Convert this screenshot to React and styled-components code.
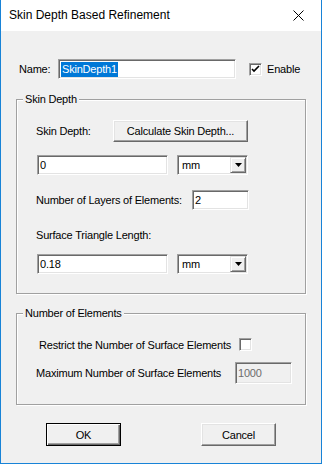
import React from 'react';
import styled, {createGlobalStyle} from 'styled-components';

const Global = createGlobalStyle`
  html, body {
    margin: 0;
    padding: 0;
    background: #ffffff;
  }
  * {
    box-sizing: border-box;
  }
`

const Window = styled.div`
  width: 322px;
  height: 464px;
  border: 1px solid #1883d7;
  border-top: none;
  display: flex;
  flex-direction: column;
  background: #f0f0f0;
  font-family: "Liberation Sans", Arial, sans-serif;
  font-size: 11px;
  letter-spacing: -0.2px;
  color: #000;
`

const TitleBar = styled.div`
  height: 31px;
  flex: none;
  background: #ffffff;
  display: flex;
  align-items: center;
  justify-content: space-between;
  padding: 0 0 1px 8px;
  font-family: "Liberation Sans", Arial, sans-serif;
  font-size: 12px;
  letter-spacing: 0;
`

const CloseButton = styled.div`
  width: 46px;
  height: 30px;
  display: flex;
  align-items: center;
  justify-content: center;
`

const Body = styled.div`
  padding: 0 15px;
  display: flex;
  flex-direction: column;
`

const Row = styled.div`
  display: flex;
  align-items: center;
  height: ${p => p.$h || 20}px;
  margin-top: ${p => p.$mt || 0}px;
  margin-left: ${p => p.$ml || 0}px;
`

const Label = styled.span`
  width: ${p => p.$w ? `${p.$w}px` : 'auto'};
  margin-left: ${p => p.$ml || 0}px;
  flex: none;
  white-space: nowrap;
`

const TextField = styled.div`
  width: ${p => p.$w}px;
  height: ${p => p.$h || 20}px;
  margin-left: ${p => p.$ml || 0}px;
  flex: none;
  display: flex;
  align-items: center;
  padding-left: 2px;
  border: 1px solid;
  border-color: #a0a0a0 #ffffff #ffffff #a0a0a0;
  box-shadow: inset 1px 1px 0 #696969, inset -1px -1px 0 #e3e3e3;
  background: ${p => p.$disabled ? '#f0f0f0' : '#ffffff'};
  color: ${p => p.$disabled ? '#6d6d6d' : '#000'};
  white-space: nowrap;
  overflow: hidden;
`

const Selected = styled.span`
  background: #0078d7;
  color: #ffffff;
  padding: 1px;
  line-height: 13px;
`

const CheckBox = styled.div`
  width: 13px;
  height: 13px;
  margin-left: ${p => p.$ml || 0}px;
  flex: none;
  background: #ffffff;
  border: 1px solid;
  border-color: #a0a0a0 #ffffff #ffffff #a0a0a0;
  box-shadow: inset 1px 1px 0 #696969, inset -1px -1px 0 #e3e3e3;
  display: flex;
  align-items: center;
  justify-content: center;
`

const Group = styled.div`
  position: relative;
  height: ${p => p.$h}px;
  margin-top: ${p => p.$mt}px;
  border: 1px solid #a0a0a0;
  box-shadow: inset 1px 1px 0 #ffffff, 1px 1px 0 #ffffff;
  padding: ${p => p.$pt}px 0 0 19px;
  display: flex;
  flex-direction: column;
`

const Caption = styled.span`
  position: absolute;
  top: -7px;
  left: 6px;
  padding: 0 2px;
  line-height: 13px;
  background: #f0f0f0;
`

const Button = styled.div`
  width: ${p => p.$w}px;
  height: ${p => p.$h || 23}px;
  margin-left: ${p => p.$ml || 0}px;
  flex: none;
  display: flex;
  align-items: center;
  justify-content: center;
  background: #f0f0f0;
  border: 1px solid;
  border-color: ${p => p.$default ? '#000' : '#ffffff #696969 #696969 #ffffff'};
  box-shadow: ${p => p.$default
    ? 'inset 1px 1px 0 #ffffff, inset -1px -1px 0 #696969, inset -2px -2px 0 #a0a0a0'
    : 'inset -1px -1px 0 #a0a0a0, inset 1px 1px 0 #e3e3e3'};
`

const Select = styled.div`
  width: ${p => p.$w}px;
  height: 20px;
  margin-left: ${p => p.$ml || 0}px;
  flex: none;
  display: flex;
  align-items: stretch;
  border: 1px solid;
  border-color: #a0a0a0 #ffffff #ffffff #a0a0a0;
  box-shadow: inset 1px 1px 0 #696969, inset -1px -1px 0 #e3e3e3;
  background: #ffffff;
  padding: 1px;
`

const SelectValue = styled.span`
  flex: 1;
  display: flex;
  align-items: center;
  padding-left: 3px;
`

const DropButton = styled.span`
  width: 16px;
  display: flex;
  align-items: center;
  justify-content: center;
  background: #f0f0f0;
  border: 1px solid;
  border-color: #e3e3e3 #696969 #696969 #e3e3e3;
  box-shadow: inset 1px 1px 0 #ffffff, inset -1px -1px 0 #a0a0a0;
`

const ButtonRow = styled.div`
  display: flex;
  margin-top: 18px;
`

const Check = () => (
  <svg width="9" height="9" viewBox="0 0 9 9">
    <path d="M1 4 L3 6 L8 1" stroke="#000" strokeWidth="1.6" fill="none"/>
  </svg>
)

const Arrow = () => (
  <svg width="7" height="4" viewBox="0 0 7 4">
    <path d="M0 0 H7 L3.5 4 Z" fill="#000"/>
  </svg>
)

const UnitSelect = ({ml}) => (
  <Select $w={71} $ml={ml}>
    <SelectValue>mm</SelectValue>
    <DropButton><Arrow/></DropButton>
  </Select>
)

const App = () => {
  return (
    <Window>
      <Global/>
      <TitleBar>
        <span>Skin Depth Based Refinement</span>
        <CloseButton>
          <svg width="11" height="11" viewBox="0 0 11 11">
            <path d="M0.5 0.5 L10.5 10.5 M10.5 0.5 L0.5 10.5" stroke="#000" strokeWidth="1"/>
          </svg>
        </CloseButton>
      </TitleBar>
      <Body>
        <Row $mt={28} $ml={3}>
          <Label $w={39}>Name:</Label>
          <TextField $w={178}><Selected>SkinDepth1</Selected></TextField>
          <CheckBox $ml={13}><Check/></CheckBox>
          <Label $ml={5}>Enable</Label>
        </Row>

        <Group $h={195} $mt={20} $pt={20}>
          <Caption>Skin Depth</Caption>
          <Row $h={22}>
            <Label $w={77}>Skin Depth:</Label>
            <Button $w={135} $h={22}>Calculate Skin Depth...</Button>
          </Row>
          <Row $mt={13}>
            <TextField $w={131} $ml={1}>0</TextField>
            <UnitSelect ml={9}/>
          </Row>
          <Row $mt={15}>
            <Label $w={156}>Number of Layers of Elements:</Label>
            <TextField $w={57}>2</TextField>
          </Row>
          <Row $mt={18} $h={13}>
            <Label>Surface Triangle Length:</Label>
          </Row>
          <Row $mt={13}>
            <TextField $w={131} $ml={1}>0.18</TextField>
            <UnitSelect ml={9}/>
          </Row>
        </Group>

        <Group $h={92} $mt={19} $pt={24}>
          <Caption>Number of Elements</Caption>
          <Row $h={13} $ml={3}>
            <Label $w={200}>Restrict the Number of Surface Elements</Label>
            <CheckBox/>
          </Row>
          <Row $h={22} $mt={11}>
            <Label $w={199}>Maximum Number of Surface Elements</Label>
            <TextField $w={57} $h={22} $disabled>1000</TextField>
          </Row>
        </Group>

        <ButtonRow>
          <Button $w={75} $ml={30} $default>OK</Button>
          <Button $w={75} $ml={80}>Cancel</Button>
        </ButtonRow>
      </Body>
    </Window>
  );
};

export default App;
